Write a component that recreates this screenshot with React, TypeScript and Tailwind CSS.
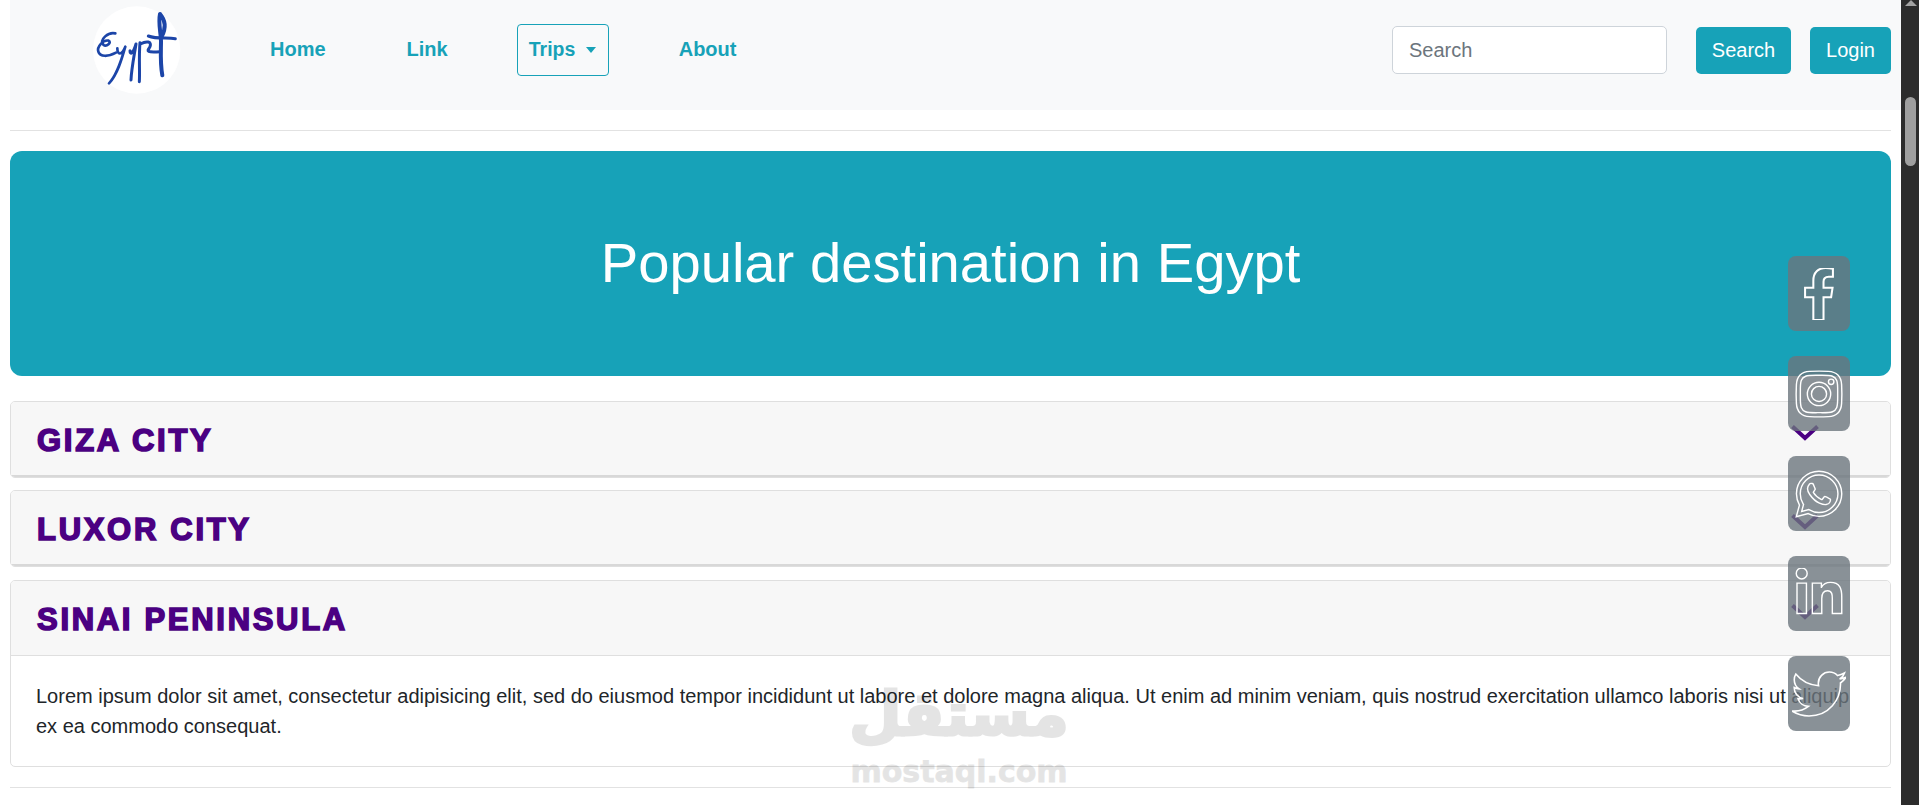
import { FaFacebookF, FaInstagram, FaLinkedinIn, FaTwitter, FaWhatsapp } from 'react-icons/fa'

const teal = 'bg-[#17a2b8]'

function EgyptLogo() {
  return (
    <svg width="120" height="100" viewBox="0 0 360 300" fill="none" stroke="#1c45a8" strokeLinecap="round" strokeLinejoin="round">
      <circle cx="170" cy="150" r="131" fill="#fff" stroke="none" />
      <path strokeWidth="8" d="M106 100C85 95 58 118 70 134C80 142 96 126 86 122C70 118 50 140 55 155C60 172 85 170 108 158" />
      <path strokeWidth="8" d="M112 145C112 165 124 168 136 140C126 175 112 225 87 250" />
      <path strokeWidth="9" d="M150 152C150 166 160 160 168 132C162 170 154 210 153 240" />
      <path strokeWidth="9" d="M180 128C176 170 180 215 178 245M181 132C200 122 216 124 210 140C204 152 192 158 240 155" />
      <path strokeWidth="12" d="M240 42C234 70 243 100 243 125C243 150 240 190 247 226M240 42C256 60 258 85 245 110" />
      <path strokeWidth="9" d="M205 108C230 118 260 112 286 116" />
    </svg>
  )
}

function NavLink({ label }: { label: string }) {
  return <a className="mt-[-2px] text-[20px] font-bold text-[#17a2b8]">{label}</a>
}

function AccordionHeader({ title, open }: { title: string; open?: boolean }) {
  return (
    <div className={`flex h-[75px] items-center justify-between bg-[#f7f7f7] pl-[26px] pr-[71px] ${open ? 'border-b border-[#dfdfdf]' : 'border-b-2 border-[#d8d8d8]'}`}>
      <h2 className={`${open ? 'mt-[5px]' : 'mt-[6px]'} text-[31px] font-bold tracking-[2.7px] text-[#4b0082] [-webkit-text-stroke:1.6px_#4b0082]`}>{title}</h2>
      <svg className="mb-[12px]" width="28" height="16" viewBox="0 0 28 16" fill="none" stroke="#4b0082" strokeWidth="4">
        <path d="M1.5 1.5L14 13L26.5 1.5" />
      </svg>
    </div>
  )
}

const socials = [
  { key: 'facebook', icon: <FaFacebookF size={52} fill="none" stroke="#fff" strokeWidth={20} /> },
  { key: 'instagram', icon: <FaInstagram size={52} fill="none" stroke="#fff" strokeWidth={14} /> },
  { key: 'whatsapp', icon: <FaWhatsapp size={52} fill="none" stroke="#fff" strokeWidth={14} /> },
  { key: 'linkedin', icon: <FaLinkedinIn size={52} fill="none" stroke="#fff" strokeWidth={14} /> },
  { key: 'twitter', icon: <FaTwitter size={54} fill="none" stroke="#fff" strokeWidth={15} /> },
]

export default function App() {
  return (
    <div className="relative flex h-[805px] w-[1919px] overflow-hidden bg-white font-['Liberation_Sans',Arial,sans-serif] text-[#212529]">
      <main className="flex-1 pl-[10px]">
        <nav className="flex h-[110px] items-center bg-[#f8f9fa] pb-[10px] pr-[10px]">
          <div className="ml-[70px]">
            <EgyptLogo />
          </div>
          <div className="ml-[70px] flex items-center">
            <NavLink label="Home" />
            <div className="ml-[81px] flex"><NavLink label="Link" /></div>
            <button className="ml-[69px] flex h-[52px] w-[92px] items-center rounded-[4px] border border-[#17a2b8] pl-[11px] text-[19.5px] font-bold text-[#17a2b8]">
              Trips
              <span className="ml-[11px] h-0 w-0 border-x-[5.5px] border-t-[6px] border-x-transparent border-t-[#17a2b8]" />
            </button>
            <div className="ml-[70px] flex"><NavLink label="About" /></div>
          </div>
          <div className="ml-auto flex items-center">
            <input
              placeholder="Search"
              className="h-[48px] w-[275px] rounded-[5px] border border-[#ced4da] bg-white px-[16px] text-[20px] placeholder:text-[#6c757d]"
            />
            <button className={`${teal} ml-[29px] h-[47px] w-[95px] rounded-[5px] text-[20px] text-white`}>Search</button>
            <button className={`${teal} ml-[19px] h-[47px] w-[81px] rounded-[5px] text-[20px] text-white`}>Login</button>
          </div>
        </nav>

        <div className="pr-[10px]">
          <hr className="mt-[20px] border-[#e2e2e2]" />
          <section className={`${teal} mt-[20px] flex h-[225px] items-center justify-center rounded-[12px] pb-[1px]`}>
            <h1 className="text-[56.2px] text-white">Popular destination in Egypt</h1>
          </section>

          <div className="mt-[25px] overflow-hidden rounded-[5px] border border-[#dfdfdf]">
            <AccordionHeader title="GIZA CITY" />
          </div>
          <div className="mt-[12px] overflow-hidden rounded-[5px] border border-[#dfdfdf]">
            <AccordionHeader title="LUXOR CITY" />
          </div>
          <div className="mt-[13px] overflow-hidden rounded-[5px] border border-[#dfdfdf]">
            <AccordionHeader title="SINAI PENINSULA" open />
            <p className="pb-[25px] pl-[25px] pr-[20px] pt-[25px] text-[20px] leading-[30px]">
              Lorem ipsum dolor sit amet, consectetur adipisicing elit, sed do eiusmod tempor incididunt ut labore et dolore magna aliqua. Ut enim ad minim veniam, quis nostrud exercitation ullamco laboris nisi ut aliquip ex ea commodo consequat.
            </p>
          </div>
          <hr className="mt-[20px] border-[#e2e2e2]" />
        </div>
      </main>

      {/* window scrollbar */}
      <div className="relative w-[18px] bg-[#2c2c2c]">
        <div className="absolute left-[4px] top-[97px] h-[69px] w-[11px] rounded-full bg-[#9f9f9f]" />
        <div className="absolute left-[4px] top-0 h-0 w-0 border-x-[6px] border-b-[6px] border-x-transparent border-b-[#a3a3a3]" />
      </div>

      {/* floating social links */}
      <div className="absolute left-[1788px] top-[256px] flex flex-col gap-[25px]">
        {socials.map((s) => (
          <a key={s.key} className="flex h-[75px] w-[62px] items-center justify-center rounded-[8px] bg-[#6c757d]/80">
            {s.icon}
          </a>
        ))}
      </div>

      {/* watermark */}
      <div className="pointer-events-none absolute left-[854px] top-[675px] flex w-[210px] flex-col items-center font-['DejaVu_Sans',sans-serif] font-bold text-black opacity-10">
        <span className="text-[60px] leading-[78px] [-webkit-text-stroke:3px_#000]">مستقل</span>
        <span className="mt-[3px] text-[30px] leading-[32px] [-webkit-text-stroke:0.8px_#000]">mostaql.com</span>
      </div>
    </div>
  )
}
